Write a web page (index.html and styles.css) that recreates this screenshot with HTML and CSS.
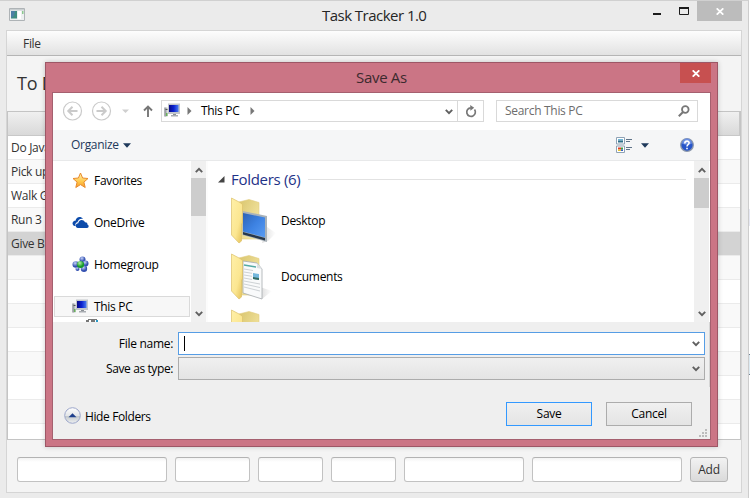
FILE: index.html
```html
<!DOCTYPE html>
<html lang="en">
<head>
<meta charset="utf-8">
<title>Task Tracker 1.0</title>
<link rel="stylesheet" href="styles.css">
</head>
<body>
<svg width="0" height="0" class="defs" aria-hidden="true">
  <defs>
    <linearGradient id="gFront" x1="0" y1="0" x2="1" y2="1"><stop offset="0" stop-color="#fff0a8"/><stop offset=".6" stop-color="#fbe691"/><stop offset="1" stop-color="#e3bf55"/></linearGradient>
    <linearGradient id="gBack" x1="0" y1="0" x2="1" y2="1"><stop offset="0" stop-color="#d9c56e"/><stop offset="1" stop-color="#fbeeb0"/></linearGradient>
    <linearGradient id="gScreen" x1="0" y1="0" x2="1" y2="1"><stop offset="0" stop-color="#2d62b4"/><stop offset=".5" stop-color="#3d82e2"/><stop offset="1" stop-color="#5a9cf2"/></linearGradient>
    <linearGradient id="gStar" x1="0" y1="0" x2="0" y2="1"><stop offset="0" stop-color="#fff3b0"/><stop offset=".6" stop-color="#ffc84a"/><stop offset="1" stop-color="#f79a2c"/></linearGradient>
    <linearGradient id="gShadow" x1="0" y1="0" x2="1" y2="0"><stop offset="0" stop-color="#999" stop-opacity=".35"/><stop offset="1" stop-color="#999" stop-opacity="0"/></linearGradient>
    <linearGradient id="gPc" x1="0" y1="0" x2="1" y2="0"><stop offset="0" stop-color="#0a0a86"/><stop offset=".5" stop-color="#0b22d0"/><stop offset="1" stop-color="#4a7cf0"/></linearGradient>
    <radialGradient id="gBlue" cx=".4" cy=".3"><stop offset="0" stop-color="#c4d2f8"/><stop offset="1" stop-color="#3350b0"/></radialGradient>
    <radialGradient id="gGreen" cx=".4" cy=".3"><stop offset="0" stop-color="#b4f0a8"/><stop offset="1" stop-color="#159a28"/></radialGradient>
    <linearGradient id="gRound" x1="0" y1="0" x2="0" y2="1"><stop offset="0" stop-color="#fff"/><stop offset=".5" stop-color="#e4e6e8"/><stop offset=".55" stop-color="#c4c9cc"/><stop offset="1" stop-color="#eef0f2"/></linearGradient>
    <symbol id="pc" viewBox="0 0 17 15">
      <path d="M.5 4.500h3v9h-3z" fill="#b9bdc0"/><path d="M.5 4.500h1v9h-1z" fill="#80868a"/><path d="M1.500 6h2v1h-2z" fill="#555"/><path d="M2 10h1.500v3H2z" fill="#68b05a"/>
      <path d="M4 .5h12v10.500H4z" fill="#c2c6cb"/><path d="M5 2h9.500v7H5z" fill="url(#gPc)"/><path d="M9 11h3v1H9z" fill="#8b9096"/><path d="M7 12h7v1.500H7z" fill="#a9adb2"/>
    </symbol>
    <symbol id="folder" viewBox="0 0 46 50">
      <path d="M8 5l10-2.500L28 5.500V42H8z" fill="url(#gBack)" stroke="#e2cd80" stroke-width=".6"/>
    </symbol>
    <symbol id="front" viewBox="0 0 46 50">
      <path d="M.5 1L9 5.500l2.500 2V26l-1 1v17L8 46 .5 38z" fill="url(#gFront)" stroke="#dcc06a" stroke-width=".7"/>
    </symbol>
    <symbol id="chev" viewBox="0 0 8 6"><path d="M.8 .8L4 4.200 7.200 .8" fill="none" stroke="#606060" stroke-width="1.900"/></symbol>
  </defs>
</svg>
<div class="window">
  <div class="titlebar">
    <svg class="appicon" width="16" height="13" viewBox="0 0 16 13"><path d="M.5.500h15v12H.5z" fill="#eef0f1" stroke="#aeb3b6"/><path d="M1 1h14v1.500H1z" fill="#c9ced0"/><path d="M2 3h6v7.500H2z" fill="#3f8d80"/><path d="M2 3h4l-1 5-3 2z" fill="#4d7fa5"/><path d="M9 3h3v8H9z" fill="#fff"/><path d="M13 3h1.500v3H13z" fill="#8bc98e"/></svg>
    <h1>Task Tracker 1.0</h1>
    <div class="winbtns">
      <svg width="8" height="2"><path d="M0 0h8v2H0z" fill="#1c1c1c"/></svg>
      <svg class="max" width="10" height="8"><path d="M.5 1h9v6.500h-9z" fill="none" stroke="#1c1c1c"/><path d="M0 0h10v2H0z" fill="#1c1c1c"/></svg>
      <div class="close"><svg width="8" height="7" viewBox="0 0 8 7"><path d="M.7.300l6.600 6.400M7.300.300L.7 6.700" stroke="#fff" stroke-width="1.700"/></svg></div>
    </div>
  </div>
  <div class="client">
    <div class="menubar"><span>File</span></div>
    <h2>To Do</h2>
    <div class="table">
      <div class="thead"></div>
      <div class="row">Do Java</div><div class="row">Pick up</div><div class="row">Walk G</div><div class="row">Run 3</div><div class="row selected">Give B</div>
      <div class="row"></div><div class="row"></div><div class="row"></div><div class="row"></div><div class="row"></div><div class="row"></div><div class="row"></div><div class="row"></div>
    </div>
    <div class="inputs">
      <i class="w150"></i><i class="w75"></i><i class="w65"></i><i class="w65"></i><i class="w120"></i><i class="w150"></i><button class="add">Add</button>
    </div>
  </div>
</div>
<div class="edge"><i></i><b></b></div>

<div class="dialog">
  <div class="dtitle"><span>Save As</span><div class="dclose"><svg width="8" height="7" viewBox="0 0 8 7"><path d="M.7.300l6.600 6.400M7.300.300L.7 6.700" stroke="#fff" stroke-width="1.800"/></svg></div></div>
  <div class="dbody">
    <div class="nav">
      <svg class="arrows" width="98" height="20" viewBox="0 0 98 20">
        <g fill="none" stroke="#cacaca"><circle cx="9.500" cy="10" r="9" stroke-width="1.200"/><circle cx="38.500" cy="10" r="9" stroke-width="1.200"/><path d="M14.500 10H5.500M9.500 5.800L5.300 10l4.200 4.200M33.500 10h9M38.500 5.800l4.200 4.200-4.200 4.200" stroke-width="2"/></g>
        <path d="M59 8.500h7L62.500 12z" fill="#cfcfcf"/>
        <path d="M85 16V6M81 9.500l4-4 4 4" fill="none" stroke="#777" stroke-width="1.900"/>
      </svg>
      <div class="address">
        <svg class="pcicon" width="17" height="15"><use href="#pc"/></svg>
        <svg class="tri" width="5" height="8"><path d="M.5 0L4.500 4 .5 8z" fill="#777"/></svg>
        <span>This PC</span>
        <svg class="tri t2" width="5" height="8"><path d="M.5 0L4.500 4 .5 8z" fill="#777"/></svg>
        <svg class="drop" width="8" height="6"><use href="#chev"/></svg>
        <div class="refresh"><svg width="12" height="13" viewBox="0 0 12 13"><path d="M9.500 4.500A4.300 4.300 0 1 1 5.800 2.800" fill="none" stroke="#777" stroke-width="1.700"/><path d="M5.200 0l4 2.800-3.800 2.900z" fill="#777"/></svg></div>
      </div>
      <div class="search"><span>Search This PC</span><svg width="12" height="12" viewBox="0 0 12 12"><circle cx="7.300" cy="4.500" r="3.300" fill="none" stroke="#777" stroke-width="1.800"/><path d="M5 7L.8 11.200" stroke="#777" stroke-width="2"/></svg></div>
    </div>
    <div class="toolbar">
      <span>Organize</span>
      <svg width="8" height="5"><path d="M0 .3h8L4 4.700z" fill="#1e395b"/></svg>
      <svg class="view" width="17" height="16" viewBox="0 0 17 16"><path d="M.5.500h8v6.500h-8zM.5 9h8v6.500h-8z" fill="#fff" stroke="#8fa2b5"/><path d="M2 2h5v1.500H2z" fill="#70b8d8"/><path d="M2 3.500h5v2H2z" fill="#2e6d88"/><path d="M2 10.500h3v2H2z" fill="#e03b28"/><path d="M5 10.500h2v2H5z" fill="#3ca044"/><path d="M2 12.500h3V14H2z" fill="#e9c52d"/><path d="M5 12.500h2V14H5z" fill="#3560c8"/><path d="M10 2.500h6M10 4.500h4M10 10.500h6M10 12.500h4" stroke="#5f7389"/></svg>
      <svg class="vdrop" width="8" height="5"><path d="M0 .3h8L4 4.700z" fill="#1e395b"/></svg>
      <svg class="help" width="14" height="14" viewBox="0 0 14 14"><circle cx="7" cy="7" r="6.300" fill="#2755c9" stroke="#8c98ab" stroke-width="1.300"/><path d="M2 5.500a5 5 0 0 1 10 0Q7 8 2 5.500z" fill="#6a8ee0"/><path d="M4.800 5.400C4.800 2.300 9.300 2.500 9.100 5 9 6.500 7.100 6.600 7 8.500M7 9.800v1.500" fill="none" stroke="#fff" stroke-width="1.600"/></svg>
    </div>
    <div class="panes">
      <div class="side">
        <div class="item"><svg width="17" height="17" viewBox="0 0 17 17"><path d="M8.500 1l2.100 5 5.400.5-4.100 3.600 1.300 5.400-4.700-2.900-4.700 2.900 1.300-5.400L1 6.500 6.400 6z" fill="url(#gStar)" stroke="#e98b2c"/></svg><span>Favorites</span></div>
        <div class="item"><svg width="17" height="17" viewBox="0 0 17 17"><path d="M2.500 12A2.700 2.700 0 0 1 2 7c.5-.3 1-.3 1.500-.2C4 3 8.500 1.600 11 4.800 8 4.200 6 6 5.500 8.200 3.300 8.500 3 10.600 3.600 12zM6 14c-3.200 0-3-4.500.3-4.700C6.500 5.500 11.400 4.600 13 8.300c2.200-.1 2.700 1.600 2.300 2.300 2 .6 1.700 3.400-.3 3.400z" fill="#0c4bab"/></svg><span>OneDrive</span></div>
        <div class="item"><svg width="17" height="17" viewBox="0 0 17 17"><g fill="url(#gBlue)"><circle cx="10.500" cy="3.500" r="3"/><circle cx="3.800" cy="8.500" r="3.300"/><circle cx="13.500" cy="7.500" r="3"/><circle cx="12" cy="12.800" r="3.200"/><circle cx="5.500" cy="13" r="2"/></g><circle cx="8.500" cy="8.500" r="3.600" fill="url(#gGreen)"/></svg><span>Homegroup</span></div>
        <div class="item current"><svg width="17" height="17" viewBox="0 0 17 17"><use href="#pc" y="1" width="17" height="15"/></svg><span>This PC</span></div>
        <svg class="peek" width="14" height="3"><path d="M3 0h9v1H3zM1 1h3v2H1zM6 1h4v2H6z" fill="#777"/><path d="M11 1h2v2h-2z" fill="#2b9ac8"/></svg>
      </div>
      <div class="scroll"><svg width="8" height="6"><use href="#chev" transform="rotate(180 4 3)" width="8" height="6"/></svg><i class="thumb t38"></i><svg class="down" width="8" height="6"><use href="#chev" width="8" height="6"/></svg></div>
      <div class="main">
        <div class="group"><svg width="7" height="7"><path d="M6.500 0v6.500H0z" fill="#444"/></svg><span>Folders (6)</span><hr></div>
        <div class="folder"><svg width="46" height="50" viewBox="0 0 46 50"><path d="M36 30l9 6-8 8-6 2z" fill="url(#gShadow)"/><use href="#folder"/><path d="M11.500 14l24.500 5v26l-24.500-7z" fill="#a9b2b9"/><path d="M12 16l22 4.500v20l-22-6z" fill="url(#gScreen)"/><path d="M12 35l22 6v2.500l-22-6z" fill="#27384b"/><use href="#front"/></svg><span>Desktop</span></div>
        <div class="folder"><svg width="46" height="50" viewBox="0 0 46 50"><path d="M29 34l12 4-10 8z" fill="url(#gShadow)"/><use href="#folder"/><path d="M12 8l14 2 5 6v30l-19-6z" fill="#f9fafb" stroke="#a6abae" stroke-width=".8"/><path d="M26 10v5l5 1z" fill="#dce0e3"/><path d="M13 12l12 2" stroke="#55a9a4" stroke-width="1.500"/><path d="M13 16l9 1.500M13 19l8 1.300M13 22l8 1.300M13 25l8 1.500M13 28l16 3M13 31l16 3.500M13 34l16 4" stroke="#c1c6ca" stroke-width=".8"/><path d="M22 20l6 1v6l-6-1z" fill="#73b7dc"/><path d="M22 24l6 1v2l-6-1z" fill="#356c61"/><use href="#front"/></svg><span>Documents</span></div>
        <div class="folder"><svg width="46" height="50" viewBox="0 0 46 50"><use href="#folder"/><use href="#front"/></svg></div>
      </div>
      <div class="scroll right"><svg width="8" height="6"><use href="#chev" transform="rotate(180 4 3)" width="8" height="6"/></svg><i class="thumb t30"></i><svg class="down" width="8" height="6"><use href="#chev" width="8" height="6"/></svg></div>
    </div>
    <div class="foot">
      <div class="fields">
        <div class="field"><label class="fn">File name:</label><div class="combo name"><i class="caret"></i><svg width="8" height="6"><use href="#chev"/></svg></div></div>
        <div class="field"><label class="st">Save as type:</label><div class="combo"><svg width="8" height="6"><use href="#chev"/></svg></div></div>
      </div>
      <div class="actions">
        <svg class="hide" width="17" height="17" viewBox="0 0 17 17"><circle cx="8.500" cy="8.500" r="7.800" fill="url(#gRound)" stroke="#9ca6ca"/><path d="M4.500 10.200h8L8.500 6.300z" fill="#1f3f8c"/></svg>
        <span>Hide Folders</span>
        <button class="btn primary">Save</button><button class="btn">Cancel</button>
      </div>
      <svg class="grip" width="8" height="8"><path d="M6 0h2v2H6zM3 3h2v2H3zM6 3h2v2H6zM0 6h2v2H0zM3 6h2v2H3zM6 6h2v2H6z" fill="#bcbcbc"/></svg>
    </div>
  </div>
</div>
</body>
</html>
```
FILE: styles.css
```css
* { box-sizing: border-box; }
body { margin: 0; width: 750px; height: 498px; overflow: hidden; position: relative; display: flex; background: #fff; font: 12px/16px "Open Sans", "Noto Sans", sans-serif; letter-spacing: -.3px; color: #000; white-space: nowrap; }
svg { display: block; flex: none; }
.defs { position: absolute; }
h1, h2 { margin: 0; font-weight: 400; }
button { font: inherit; letter-spacing: inherit; padding: 0; }

.window { width: 749px; height: 498px; background: #ebebeb; border-top: 1px solid #d0d0d0; border-right: 1px solid #cdcdcd; padding-left: 6px; }
.titlebar { height: 29px; display: flex; align-items: flex-start; }
.appicon { margin: 7px 0 0 3px; }
h1 { flex: 1; margin: 3px 0 0 297px; font-size: 15px; line-height: 22px; letter-spacing: -.53px; color: #262626; }
.winbtns { display: flex; align-items: flex-start; }
.winbtns > svg { margin-top: 12px; }
.winbtns .max { margin: 6px 8px 0 18px; }
.close { width: 45px; height: 20px; background: #bcbcbc; display: flex; align-items: center; justify-content: center; margin-right: 6px; }
.client { width: 736px; height: 463px; border: 1px solid #d5d5d5; background: #f4f4f4; }
.menubar { height: 25px; background: linear-gradient(#fdfdfd, #e2e2e2); border-bottom: 1px solid #b5b5b5; padding: 5px 0 0 16px; color: #333; }
h2 { height: 55px; padding: 14px 0 0 10px; font-size: 18px; line-height: 26px; letter-spacing: -.2px; color: #333; }
.table { height: 329px; border: 1px solid #c4c4c4; overflow: hidden; background: #fff; }
.thead { height: 24px; background: linear-gradient(#f0f0f0, #d9d9d9); border-bottom: 1px solid #c8c8c8; border-right: 1px solid #c8c8c8; }
.row { height: 24px; border-bottom: 1px solid #ebebeb; padding: 4px 0 0 3px; color: #333; }
.row:nth-child(odd) { background: #f9f9f9; }
.row.selected { background: #d3d3d3; }
.inputs { display: flex; gap: 8px; padding: 17px 0 0 10px; }
.inputs i { height: 25px; border: 1px solid #c2c2c2; border-top-color: #b3b3b3; border-radius: 3px; background: linear-gradient(#f3f3f3, #fff 4px); }
.w150 { width: 150px; } .w75 { width: 75px; } .w65 { width: 65px; } .w120 { width: 120px; }
.add { width: 38px; height: 25px; border: 1px solid #b5b5b5; border-radius: 3px; background: linear-gradient(#f2f2f2, #dadada); color: #333; }
.edge { width: 1px; height: 498px; display: flex; flex-direction: column; gap: 145px; padding-top: 209px; }
.edge i { height: 17px; background: #e6e8f3; }
.edge b { margin-top: -17px; height: 21px; background: #dceaf2; border-top: 1px solid #708090; border-bottom: 1px solid #708090; }

.dialog { position: absolute; left: 45px; top: 62px; width: 673px; height: 385px; background: #cb7585; border: 1px solid #9d5766; padding: 0 6px; box-shadow: 0 0 5px rgba(0,0,0,.2); }
.dtitle { height: 29px; display: flex; justify-content: flex-end; align-items: flex-start; }
.dtitle span { flex: 1; margin: 3px 0 0 304px; font-size: 15px; line-height: 22px; letter-spacing: -.3px; color: #3c2a2e; }
.dclose { width: 31px; height: 20px; background: #c75050; display: flex; align-items: center; justify-content: center; }
.dbody { width: 659px; height: 348px; border: 1px solid #a5606f; background: #fff; }
.nav { height: 37px; display: flex; padding: 7px 0 0 10px; }
.arrows { margin-top: 1px; }
.address { width: 323px; height: 22px; border: 1px solid #d9d9d9; display: flex; align-items: center; }
.pcicon { margin: -2px 0 0 2px; }
.tri { margin-left: 6px; }
.address span { margin-left: 9px; width: 40px; }
.t2 { margin-left: 9px; }
.drop { margin: 2px 4px 0 auto; }
.refresh { width: 26px; height: 20px; border-left: 1px solid #d9d9d9; display: flex; align-items: center; justify-content: center; }
.search { width: 202px; height: 22px; margin-left: 12px; border: 1px solid #d9d9d9; display: flex; align-items: center; justify-content: space-between; padding: 0 7px 0 8px; color: #6d6d6d; }
.toolbar { height: 31px; background: #f5f6f7; border-bottom: 1px solid #e8e9ea; display: flex; align-items: center; padding-left: 18px; color: #1e395b; }
.toolbar span { width: 47px; margin-right: 5px; }
.toolbar .view { margin-left: 485px; }
.vdrop { margin-left: 8px; }
.help { margin-left: 31px; }
.panes { height: 161px; display: flex; overflow: hidden; }
.side { width: 138px; height: 161px; overflow: hidden; padding: 9px 1px 0; }
.item { height: 21px; margin-bottom: 21px; padding-left: 17px; display: flex; align-items: center; gap: 5px; border: 1px solid transparent; }
.item.current { margin: 0; border-color: #dadada; background: #f7f7f7; }
.peek { margin: 2px 0 0 31px; }
.scroll { width: 15px; height: 161px; background: #f0f0f0; display: flex; flex-direction: column; align-items: center; padding: 6px 0 5px; }
.thumb { width: 15px; background: #cdcdcd; margin-top: 5px; }
.t38 { height: 38px; } .t30 { height: 30px; }
.down { margin-top: auto; }
.main { width: 488px; height: 161px; overflow: hidden; padding: 6px 8px 0 10px; border-left: 2px solid #fcfcfc; }
.group { height: 24px; display: flex; align-items: center; color: #1e3287; font-size: 15px; letter-spacing: -.3px; }
.group span { width: 69px; margin: 0 8px 0 6px; }
.group hr { flex: 1; margin: 0; border: 0; border-top: 1px solid #e2e2e2; }
.folder { height: 56px; display: flex; align-items: flex-start; padding: 6px 0 0 13px; }
.folder span { margin: 16px 0 0 4px; }
.foot { position: relative; height: 117px; background: #efefef; }
.fields { height: 65px; width: 657px; border-right: 1px solid #d5d5d5; padding: 10px 4px 0 0; display: flex; flex-direction: column; gap: 2px; }
.field { display: flex; align-items: center; justify-content: flex-end; gap: 5px; }
.field .st { letter-spacing: -.4px; }
.combo { width: 527px; height: 23px; border: 1px solid #acacac; background: linear-gradient(#f0f0f0, #e4e4e4); display: flex; align-items: center; justify-content: flex-end; padding-right: 4px; }
.combo.name { background: #fff; border-color: #569de5; justify-content: space-between; padding-left: 5px; }
.caret { width: 1px; height: 15px; background: #000; }
.actions { display: flex; height: 52px; padding: 15px 0 0 11px; }
.hide { margin-top: 5px; }
.actions span { flex: 1; margin: 7px 0 0 4px; letter-spacing: -.38px; }
.btn { width: 86px; height: 24px; border: 1px solid #acacac; background: linear-gradient(#f0f0f0, #e4e4e4); color: #000; margin-right: 18px; }
.btn.primary { border-color: #3399ff; margin-right: 14px; }
.grip { position: absolute; right: 3px; bottom: 2px; }
```
